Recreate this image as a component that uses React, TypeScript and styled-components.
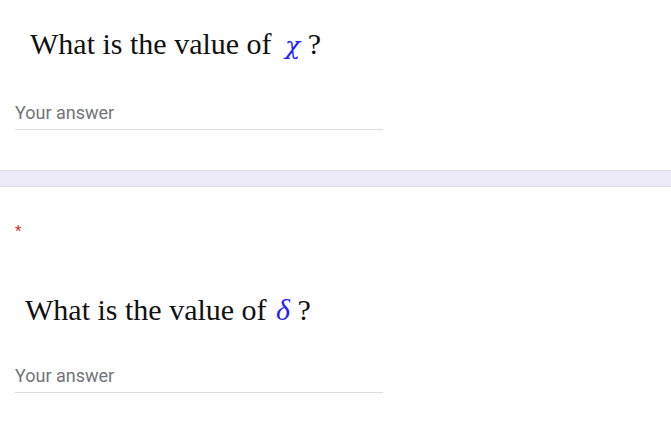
import React from "react";
import styled, { createGlobalStyle } from "styled-components";

const GlobalStyle = createGlobalStyle`
  html, body {
    margin: 0;
    padding: 0;
    background: #ffffff;
  }
  body {
    font-family: Roboto, "Liberation Sans", sans-serif;
  }
`;

export default function App() {
  return (
    <>
      <GlobalStyle />
      <Page>
        <QuestionCard $top={27} $bottom={40}>
          <Title $indent={15}>
            What is the value of{" "}
            <MathVar $gap={6} $tex>
              χ
            </MathVar>{" "}
            ?
          </Title>
          <AnswerField placeholder="Your answer" $top={41} />
        </QuestionCard>
        <Divider />
        <QuestionCard $top={37} $bottom={30}>
          <Required>*</Required>
          <Title $indent={10} $top={54}>
            What is the value of <MathVar $gap={2}>δ</MathVar> ?
          </Title>
          <AnswerField placeholder="Your answer" $top={38} />
        </QuestionCard>
      </Page>
    </>
  );
}

const Page = styled.main`
  width: 671px;
  min-height: 425px;
  display: flex;
  flex-direction: column;
  background: #ffffff;
`;

const QuestionCard = styled.section<{ $top: number; $bottom: number }>`
  display: flex;
  flex-direction: column;
  align-items: flex-start;
  padding: ${(p) => p.$top}px 15px ${(p) => p.$bottom}px 15px;
`;

const Title = styled.div<{ $indent: number; $top?: number }>`
  margin-left: ${(p) => p.$indent}px;
  margin-top: ${(p) => p.$top ?? 0}px;
  font-family: "Liberation Serif", "Times New Roman", serif;
  font-size: 30px;
  line-height: 34px;
  color: #111111;
  white-space: nowrap;
`;

const MathVar = styled.span<{ $gap: number; $tex?: boolean }>`
  margin-left: ${(p) => p.$gap}px;
  font-family: ${(p) =>
    p.$tex ? `"DejaVu Serif", "Liberation Serif", serif` : `"Liberation Serif", serif`};
  font-size: ${(p) => (p.$tex ? 25 : 30)}px;
  line-height: 0;
  font-style: italic;
  color: #1f1fff;
`;

const AnswerField = styled.input<{ $top: number }>`
  width: 368px;
  margin-top: ${(p) => p.$top}px;
  padding: 0 0 5px 0;
  border: none;
  border-bottom: 1px solid #dadce0;
  outline: none;
  background: transparent;
  font-family: Roboto, "Liberation Sans", sans-serif;
  font-size: 18px;
  line-height: 22px;
  color: #202124;

  &::placeholder {
    color: #70757a;
  }
`;

const Divider = styled.div`
  height: 15px;
  border-top: 1px solid #dadce0;
  border-bottom: 1px solid #dadce0;
  background: #eeebf8;
`;

const Required = styled.span`
  font-family: Roboto, "Liberation Sans", sans-serif;
  font-size: 15px;
  line-height: 15px;
  color: #d93025;
`;
